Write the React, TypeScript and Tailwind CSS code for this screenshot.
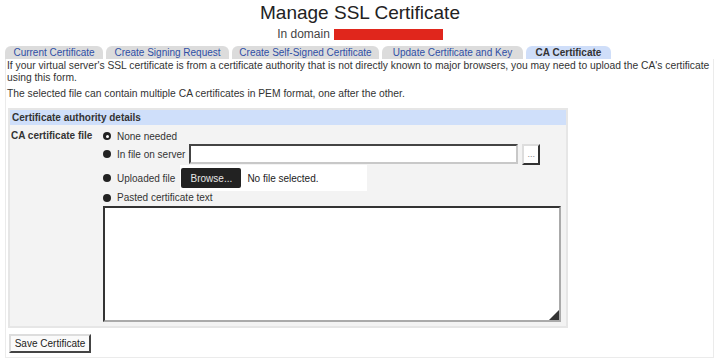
export default function App() {
  const tabs = [
    { label: "Current Certificate", w: "w-[98px]" },
    { label: "Create Signing Request", w: "w-[123px]" },
    { label: "Create Self-Signed Certificate", w: "w-[147px]" },
    { label: "Update Certificate and Key", w: "w-[141px]" },
  ];

  return (
    <div className="w-[720px] h-[364px] bg-white font-['Liberation_Sans',Arial,sans-serif] text-[#333] text-[10px] overflow-hidden">
      {/* Titulo */}
      <h1 className="text-center text-[19px] leading-[24px] pt-[1px] text-[#222]">Manage SSL Certificate</h1>
      <div className="flex justify-center items-center h-[14px] mt-[2px] text-[12px] text-[#444]">
        <span>In domain</span>
        <span className="ml-[4px] w-[109px] h-[11px] bg-[#e0261c]" />
      </div>

      {/* Tabs */}
      <div className="flex items-end ml-[5px] mt-[5px] h-[13px] gap-[3px]">
        {tabs.map((t) => (
          <div
            key={t.label}
            className={`${t.w} h-[13px] flex items-center justify-center bg-[#dcdcdc] rounded-t-[6px] text-[#2f4fa6] leading-none`}
          >
            {t.label}
          </div>
        ))}
        <div className="w-[85px] h-[13px] flex items-center justify-center bg-[#cfdef9] rounded-t-[6px] font-bold text-[#333] leading-none">
          CA Certificate
        </div>
      </div>

      {/* Contenido */}
      <div className="mx-[5px] w-[709px] border border-[#ebebeb] border-t-0 pl-[1px] pt-[1px] pb-[4px]">
        <p className="leading-[12px] pr-[2px] text-[10.3px]">
          If your virtual server's SSL certificate is from a certificate authority that is not directly known to major browsers, you may need to upload the CA's certificate using this form.
        </p>
        <p className="leading-[12px] mt-[4px] text-[10.3px]">
          The selected file can contain multiple CA certificates in PEM format, one after the other.
        </p>

        {/* Tabla de detalles */}
        <div className="ml-[1px] mt-[8px] w-[560px] border-2 border-[#e6e6e6] bg-[#f3f3f3]">
          <div className="h-[15px] bg-[#cfdffa] font-bold pl-[2px] leading-[15px]">Certificate authority details</div>
          <div className="flex pt-[4px] pb-[4px]">
            <div className="w-[93px] pl-[1px] font-bold h-[14px] leading-[14px]">CA certificate file</div>
            <div className="flex flex-col">
              <label className="flex items-center h-[14px]">
                <span className="w-[8px] h-[8px] rounded-full bg-[#222] flex items-center justify-center">
                  <span className="w-[3px] h-[3px] rounded-full bg-white" />
                </span>
                <span className="ml-[6px]">None needed</span>
              </label>
              <div className="flex items-center h-[22px]">
                <span className="w-[8px] h-[8px] rounded-full bg-[#222]" />
                <span className="ml-[6px]">In file on server</span>
                <div className="ml-[4px] w-[329px] h-[20px] bg-white border-2 border-t-[#444] border-l-[#444] border-r-[#c8c8c8] border-b-[#c8c8c8]" />
                <div className="ml-[4px] w-[18px] h-[21px] bg-white border-2 border-t-[#ddd] border-l-[#ddd] border-r-[#333] border-b-[#333] flex items-center justify-center text-[#888] text-[9px] leading-none">
                  ...
                </div>
              </div>
              <div className="flex items-center h-[26px]">
                <span className="w-[8px] h-[8px] rounded-full bg-[#222]" />
                <span className="ml-[6px]">Uploaded file</span>
                <div className="ml-[5px] w-[187px] h-[26px] bg-white flex items-center pl-[1px]">
                  <span className="w-[60px] h-[20px] rounded-[2px] bg-[#222] text-[#e6e6e6] flex items-center justify-center">Browse...</span>
                  <span className="ml-[6px] text-[#222]">No file selected.</span>
                </div>
              </div>
              <label className="flex items-center h-[13px]">
                <span className="w-[8px] h-[8px] rounded-full bg-[#222]" />
                <span className="ml-[6px]">Pasted certificate text</span>
              </label>
              <div className="relative mt-[2px] w-[458px] h-[116px] bg-white border-2 border-t-[#333] border-l-[#333] border-r-[#aaa] border-b-[#aaa]">
                <svg className="absolute right-0 bottom-0" width="10" height="10" viewBox="0 0 10 10">
                  <polygon points="10,0 10,10 0,10" fill="#333" />
                </svg>
              </div>
            </div>
          </div>
        </div>

        <button className="ml-[2px] mt-[6px] w-[82px] h-[19px] bg-[#fafafa] border-2 border-t-[#ddd] border-l-[#ddd] border-r-[#444] border-b-[#444] text-[10px] text-[#222] leading-none flex items-center justify-center">
          Save Certificate
        </button>
      </div>
    </div>
  );
}
